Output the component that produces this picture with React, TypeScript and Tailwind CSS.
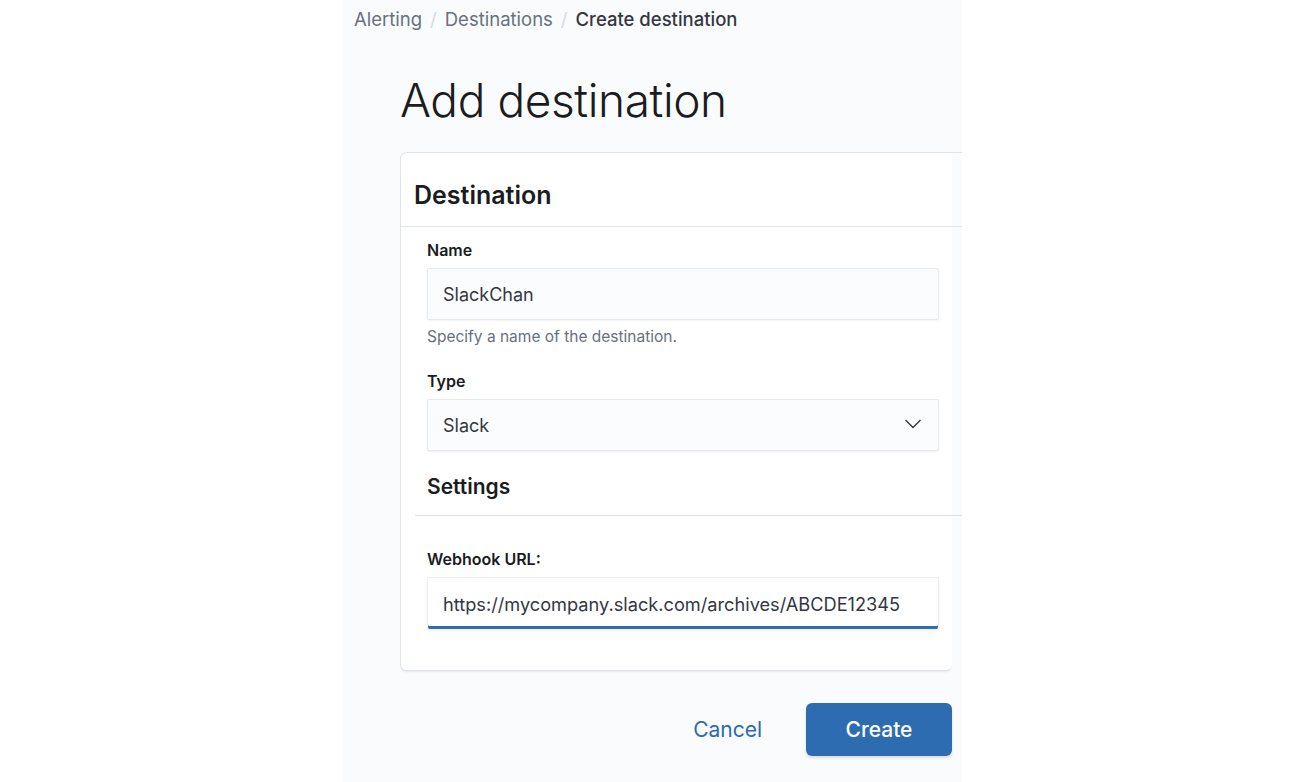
import React from "react";

const font = { fontFamily: "Inter, 'Noto Sans', sans-serif" };

export default function App() {
  const [name, setName] = React.useState("SlackChan");
  const [type, setType] = React.useState("Slack");
  const [url, setUrl] = React.useState("https://mycompany.slack.com/archives/ABCDE12345");

  return (
    <div className="flex h-[782px] w-full bg-white" style={font}>
      <div className="ml-[343px] h-[782px] w-[619px] overflow-hidden bg-[#fafbfd]">
        <nav className="flex h-[40px] items-center gap-[8px] pl-[11px] text-[18.5px] text-[#69707d]">
          <span>Alerting</span>
          <span className="text-[#d3dae6]">/</span>
          <span>Destinations</span>
          <span className="text-[#d3dae6]">/</span>
          <span className="font-medium text-[#343741]">Create destination</span>
        </nav>

        <h1 className="ml-[57px] mt-[32px] text-[46px] font-light leading-[56px] tracking-[-0.4px] text-[#1a1c21]">
          Add destination
        </h1>

        <div className="ml-[57px] mt-[24px] w-[552px]">
          <div className="rounded-b-[6px] rounded-tl-[6px] border-b border-l border-[#dfe3ea] bg-white shadow-[0_3px_2px_-2px_rgba(0,0,0,0.08)]">
            <div className="-mr-[12px] flex h-[75px] items-center rounded-tl-[6px] border-b border-t border-[#dfe3ea] px-[13px] pt-[10px]">
              <h2 className="text-[25px] font-semibold leading-[32px] text-[#1a1c21]">Destination</h2>
            </div>

            <div className="pb-[41px] pl-[26px] pr-[27px] pt-[13px]">
              <Label text="Name" />
              <input
                className="mt-[8px] h-[52px] w-[512px] rounded-[2px] border border-[#e6e9f0] bg-[#fbfcfd] px-[15px] text-[18px] text-[#343741] shadow-[0_1px_2px_rgba(0,0,0,0.05)] outline-none"
                value={name}
                onChange={(event) => setName(event.target.value)}
              />
              <p className="mt-[7px] text-[15.5px] leading-[20px] text-[#69707d]">Specify a name of the destination.</p>

              <div className="mt-[24px]">
                <Label text="Type" />
              </div>
              <div className="relative mt-[8px] h-[52px] w-[512px]">
                <select
                  className="h-full w-full appearance-none rounded-[2px] border border-[#e6e9f0] bg-[#fbfcfd] px-[15px] text-[18px] text-[#343741] shadow-[0_1px_2px_rgba(0,0,0,0.06)] outline-none"
                  value={type}
                  onChange={(event) => setType(event.target.value)}
                >
                  <option>Slack</option>
                  <option>Chime</option>
                  <option>Custom webhook</option>
                </select>
                <svg
                  className="pointer-events-none absolute right-[17px] top-[19px]"
                  width="18"
                  height="12"
                  viewBox="0 0 18 12"
                  fill="none"
                >
                  <polyline points="1.5,2 9,9.5 16.5,2" stroke="#343741" strokeWidth="1.4" />
                </svg>
              </div>

              <h3 className="mt-[22px] text-[21px] font-semibold leading-[28px] text-[#1a1c21]">Settings</h3>
              <div className="-ml-[12px] -mr-[39px] mt-[14px] border-t border-[#dcdfe8]" />

              <div className="mt-[33px]">
                <Label text="Webhook URL:" />
              </div>
              <input
                className="mt-[8px] h-[52px] w-[512px] rounded-[2px] border border-b-0 border-[#eceef3] bg-white px-[15px] text-[18.2px] text-[#343741] shadow-[inset_0_-3px_0_#2f6db5,0_2px_3px_rgba(0,0,0,0.06)] outline-none"
                value={url}
                onChange={(event) => setUrl(event.target.value)}
              />
            </div>
          </div>

          <div className="mt-[32px] flex items-center justify-end gap-[44px]">
            <button className="text-[21px] text-[#2a6bb3]">Cancel</button>
            <button className="h-[53px] w-[146px] rounded-[6px] bg-[#2e6cb2] text-[21px] font-medium text-white shadow-[0_2px_3px_rgba(0,0,0,0.12)]">
              Create
            </button>
          </div>
        </div>
      </div>
    </div>
  );
}

function Label({ text }: { text: string }) {
  return <label className="block text-[16px] font-semibold leading-[20px] text-[#1a1c21]">{text}</label>;
}
